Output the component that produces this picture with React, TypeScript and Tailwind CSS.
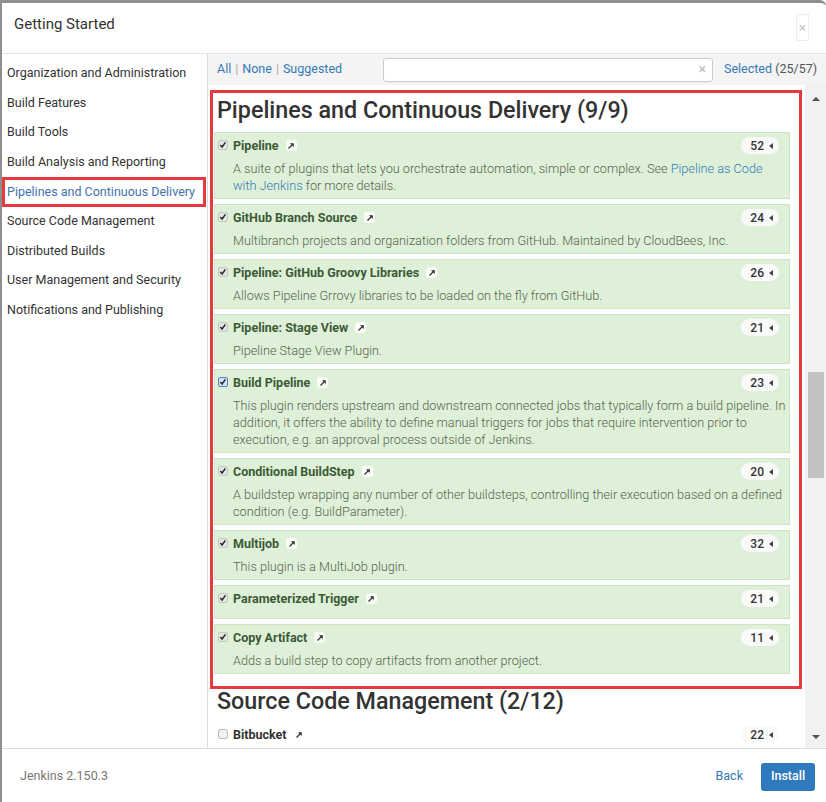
import type { ReactNode } from "react";

type Plugin = {
  name: string;
  count: number;
  desc?: ReactNode;
  focused?: boolean;
};

const categories = [
  "Organization and Administration",
  "Build Features",
  "Build Tools",
  "Build Analysis and Reporting",
  "Pipelines and Continuous Delivery",
  "Source Code Management",
  "Distributed Builds",
  "User Management and Security",
  "Notifications and Publishing",
];

const plugins: Plugin[] = [
  {
    name: "Pipeline",
    count: 52,
    desc: (
      <>
        A suite of plugins that lets you orchestrate automation, simple or complex. See{" "}
        <a className="text-[#337ab7]" href="#">
          Pipeline as Code with Jenkins
        </a>{" "}
        for more details.
      </>
    ),
  },
  {
    name: "GitHub Branch Source",
    count: 24,
    desc: "Multibranch projects and organization folders from GitHub. Maintained by CloudBees, Inc.",
  },
  {
    name: "Pipeline: GitHub Groovy Libraries",
    count: 26,
    desc: "Allows Pipeline Grrovy libraries to be loaded on the fly from GitHub.",
  },
  { name: "Pipeline: Stage View", count: 21, desc: "Pipeline Stage View Plugin." },
  {
    name: "Build Pipeline",
    count: 23,
    focused: true,
    desc: "This plugin renders upstream and downstream connected jobs that typically form a build pipeline. In addition, it offers the ability to define manual triggers for jobs that require intervention prior to execution, e.g. an approval process outside of Jenkins.",
  },
  {
    name: "Conditional BuildStep",
    count: 20,
    desc: "A buildstep wrapping any number of other buildsteps, controlling their execution based on a defined condition (e.g. BuildParameter).",
  },
  { name: "Multijob", count: 32, desc: "This plugin is a MultiJob plugin." },
  { name: "Parameterized Trigger", count: 21 },
  {
    name: "Copy Artifact",
    count: 11,
    desc: "Adds a build step to copy artifacts from another project.",
  },
];

function Checkbox({ checked, focused }: { checked: boolean; focused?: boolean }) {
  return (
    <svg width="10" height="10" viewBox="0 0 10 10" className="shrink-0">
      <rect
        x="0.5"
        y="0.5"
        width="9"
        height="9"
        rx="1.5"
        fill={focused ? "#d4e3f7" : checked ? "#e4e6e4" : "#f2f2f2"}
        stroke={focused ? "#4d86c9" : checked ? "#c3c9c1" : "#b9b9b9"}
      />
      {checked && (
        <path d="M2.3 5 L4.1 7 L7.4 2.4" fill="none" stroke="#2b2b2b" strokeWidth="1.5" />
      )}
    </svg>
  );
}

function ExtLink() {
  return (
    <span className="ml-[7px] flex h-[11px] w-[11px] items-center justify-center rounded-[3px] bg-white/80">
      <svg width="8" height="8" viewBox="0 0 8 8">
        <path d="M1.5 6.5 L6 2" stroke="#333" strokeWidth="1.3" />
        <path d="M3 1.2 H6.8 V5 Z" fill="#333" />
      </svg>
    </span>
  );
}

function Badge({ count }: { count: number }) {
  return (
    <span className="mr-[9px] flex h-[17px] items-center gap-[5px] rounded-full bg-[#fafafa] pl-[9px] pr-[6px] text-[12px] font-medium text-[#333]">
      {count}
      <span className="h-0 w-0 border-y-[3.5px] border-r-[4px] border-y-transparent border-r-[#444]" />
    </span>
  );
}

function PluginRow({ plugin, selected }: { plugin: Plugin; selected: boolean }) {
  return (
    <div
      className={
        selected
          ? "flex border border-[#cfe5c2] bg-[#dff0d8] pb-[4px] pl-[3px] pr-[1px] pt-[4px]"
          : "flex border border-transparent bg-white pb-[4px] pl-[3px] pr-[1px] pt-[4px]"
      }
    >
      <div className="w-[15px] pt-[3px]">
        <Checkbox checked={selected} focused={plugin.focused} />
      </div>
      <div className="flex-1">
        <div className="flex h-[17px] items-center justify-between">
          <div className="flex items-center">
            <span
              className={
                selected
                  ? "text-[12.5px] font-bold leading-[17px] text-[#3b5a36]"
                  : "text-[12.5px] font-bold leading-[17px] text-[#333]"
              }
            >
              {plugin.name}
            </span>
            <ExtLink />
          </div>
          <Badge count={plugin.count} />
        </div>
        {plugin.desc ? (
          <p className="mt-[6px] text-[12.7px] font-light leading-[17px] text-[#56654f]">{plugin.desc}</p>
        ) : (
          selected && <div className="h-[7px]" />
        )}
      </div>
    </div>
  );
}

export default function App() {
  return (
    <div className="flex h-[802px] w-[826px] flex-col overflow-hidden rounded-tr-md border-l-2 border-t-[3px] border-[#8f8f8f] bg-white font-['Roboto','Liberation_Sans',sans-serif] text-[#333]">
      <header className="flex h-[51px] shrink-0 items-start justify-between border-b border-[#e5e5e5] pl-[12px] pr-[17px]">
        <h1 className="mt-[12px] text-[15px] font-normal leading-[18px] text-[#333]">Getting Started</h1>
        <button className="mt-[11px] flex h-[27px] w-[13px] items-center justify-center border border-[#eeeeee] text-[13px] leading-none text-[#c4c4c4]">
          ×
        </button>
      </header>

      <div className="flex h-[694px] shrink-0">
        <nav className="w-[206px] shrink-0 border-r border-[#dddddd] pt-[5px]">
          {categories.map((c) =>
            c === "Pipelines and Continuous Delivery" ? (
              <div
                key={c}
                className="mr-[1px] flex h-[30px] items-center border-[3px] border-[#e53b3f] pl-[2px] text-[12.5px] text-[#3f72af]"
              >
                {c}
              </div>
            ) : (
              <div key={c} className="flex h-[29.5px] items-center pl-[5px] text-[12.5px] text-[#333]">
                {c}
              </div>
            ),
          )}
        </nav>

        <div className="flex flex-1 flex-col">
          <div className="flex h-[31px] shrink-0 items-center bg-[#f4f4f4] pl-[9px]">
            <div className="flex w-[166px] items-center gap-[4px] text-[12.5px] text-[#337ab7]">
              <span>All</span>
              <span className="text-[#aaa]">|</span>
              <span>None</span>
              <span className="text-[#aaa]">|</span>
              <span>Suggested</span>
            </div>
            <div className="flex h-[24px] w-[330px] items-center justify-end rounded-[3px] border border-[#cccccc] bg-white pr-[6px] text-[14px] text-[#bbbbbb]">
              ×
            </div>
            <div className="ml-[11px] text-[12.5px]">
              <span className="text-[#337ab7]">Selected</span> <span className="text-[#555]">(25/57)</span>
            </div>
          </div>

          <div className="flex min-h-0 flex-1">
            <main className="flex-1 overflow-hidden">
              <section className="ml-[2px] mr-[3px] mt-[5px] border-[3px] border-[#e53b3f] pb-[12px] pl-[1px] pr-[9px]">
                <h2 className="pl-[3px] pt-[4px] text-[23.3px] font-medium leading-[26px] text-[#333]">
                  Pipelines and Continuous Delivery (9/9)
                </h2>
                <div className="mt-[9px] flex flex-col gap-[5px]">
                  {plugins.map((p) => (
                    <PluginRow key={p.name} plugin={p} selected />
                  ))}
                </div>
              </section>
              <div className="ml-[6px] mr-[15px]">
                <h2 className="pl-[3px] text-[23.3px] font-medium leading-[24px] text-[#333]">
                  Source Code Management (2/12)
                </h2>
                <div className="mt-[8px]">
                  <PluginRow plugin={{ name: "Bitbucket", count: 22 }} selected={false} />
                </div>
              </div>
            </main>

            <div className="flex w-[21px] shrink-0 flex-col items-center bg-[#f1f1f1]">
              <span className="mt-[12px] h-0 w-0 border-x-[4px] border-b-[4px] border-x-transparent border-b-[#505050]" />
              <div className="mt-[271px] h-[106px] w-[16px] bg-[#c1c1c1]" />
              <div className="flex-1" />
              <span className="mb-[9px] h-0 w-0 border-x-[4px] border-t-[4px] border-x-transparent border-t-[#505050]" />
            </div>
          </div>
        </div>
      </div>

      <footer className="flex flex-1 items-center border-t border-[#dddddd] pl-[18px] pr-[11px] pt-[2px]">
        <span className="text-[12.5px] text-[#777]">Jenkins 2.150.3</span>
        <a href="#" className="ml-auto text-[12.5px] text-[#337ab7]">
          Back
        </a>
        <button className="ml-[18px] h-[28px] w-[54px] rounded-[3px] bg-[#2f79bd] text-[12.5px] font-medium text-white">
          Install
        </button>
      </footer>
    </div>
  );
}
